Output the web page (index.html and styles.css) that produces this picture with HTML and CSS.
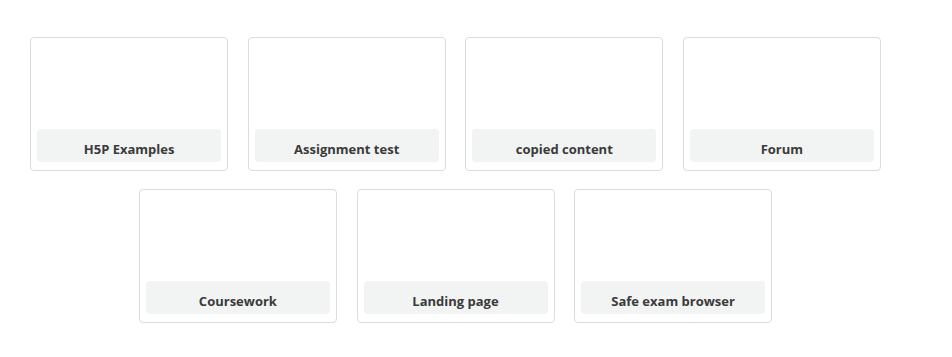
FILE: index.html
```html
<!DOCTYPE html>
<html lang="en">
<head>
    <meta charset="UTF-8">
    <title>Courses</title>
    <link rel="stylesheet" href="styles.css">
</head>
<body>
<div id="courses">
    <div class="card"><div class="card-img"></div><span class="card-name">H5P Examples</span></div>
    <div class="card"><div class="card-img"></div><span class="card-name">Assignment test</span></div>
    <div class="card"><div class="card-img"></div><span class="card-name">copied content</span></div>
    <div class="card"><div class="card-img"></div><span class="card-name">Forum</span></div>
    <div class="card"><div class="card-img"></div><span class="card-name">Coursework</span></div>
    <div class="card"><div class="card-img"></div><span class="card-name">Landing page</span></div>
    <div class="card"><div class="card-img"></div><span class="card-name">Safe exam browser</span></div>
</div>
</body>
</html>
```

FILE: styles.css
```css
body {
    margin: 0px;
    padding: 0px;
    background: #fff;
    font-family: "Open Sans", "Liberation Sans", sans-serif;
}

#courses {
    width: 851px;
    margin-left: 30px;
    padding-top: 37px;
    display: flex;
    flex-wrap: wrap;
    justify-content: center;
    column-gap: 19.6px;
    row-gap: 18px;
}

.card {
    width: 198px;
    height: 134px;
    border: 1px solid #dcdcdc;
    border-radius: 4px;
    box-sizing: border-box;
    padding: 0 6px 8px 6px;
    display: flex;
    flex-direction: column;
}

.card-img {
    flex: 1;
}

.card-name {
    display: block;
    height: 33px;
    box-sizing: border-box;
    padding-top: 10px;
    background: #f2f3f3;
    border-radius: 4px;
    text-align: center;
    font-size: 13px;
    line-height: 20px;
    font-weight: bold;
    color: #3a3a3a;
}
```
